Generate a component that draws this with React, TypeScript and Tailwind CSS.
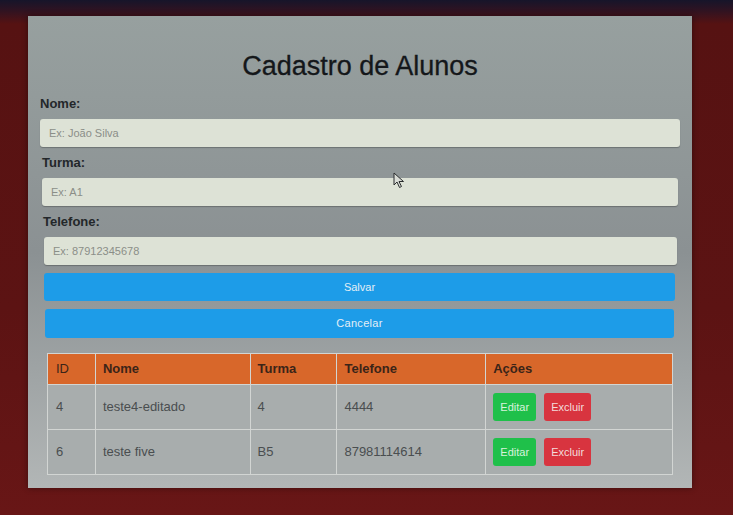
import React from 'react';

type Aluno = { id: number; nome: string; turma: string; telefone: string };

const alunos: Aluno[] = [
    { id: 4, nome: 'teste4-editado', turma: '4', telefone: '4444' },
    { id: 6, nome: 'teste five', turma: 'B5', telefone: '87981114614' },
];

const fields = [
    { label: 'Nome:', placeholder: 'Ex: João Silva', mx: 'ml-[12px] mr-[12px]' },
    { label: 'Turma:', placeholder: 'Ex: A1', mx: 'ml-[14px] mr-[14px]' },
    { label: 'Telefone:', placeholder: 'Ex: 87912345678', mx: 'ml-[16px] mr-[15px]' },
];

function Cursor() {
    return (
        <svg className="absolute left-[365px] top-[156px]" width="12" height="17" viewBox="0 0 12 17">
            <path d="M1 1 L1 13 L4 10 L6.5 15.5 L8.5 14.5 L6 9.5 L10.5 9.5 Z" fill="#d9dcd6" stroke="#2a2d2e" strokeWidth="1" strokeLinejoin="round" />
        </svg>
    );
}

export default function App() {
    return (
        <div
            className="w-[733px] h-[515px] overflow-hidden bg-[linear-gradient(to_bottom,#16152a_0px,#2e1322_10px,#561212_24px,#5c1313_60%,#681616_100%)] pt-[16px] pl-[28px]"
            style={{ fontFamily: '"Liberation Sans", Arial, sans-serif' }}
        >
            <div className="relative w-[664px] h-[472px] bg-gradient-to-b from-[#97a09f] via-[#8b9193] to-[#b2b6b6] shadow-[0_0_6px_rgba(0,0,0,0.4)] pt-[35px]">
                <h1 className="text-center text-[27px] leading-[30px] text-[#14171a] [-webkit-text-stroke:0.3px_#14171a]">Cadastro de Alunos</h1>

                <div className="mt-[15px]">
                    {fields.map((f, i) => (
                        <div key={f.label} className={i === 0 ? '' : 'mt-[8px]'}>
                            <label className={`block text-[13px] leading-[16px] font-bold text-[#23272a] ${i === 0 ? 'ml-[12px]' : i === 1 ? 'ml-[14px]' : 'ml-[15px]'}`}>
                                {f.label}
                            </label>
                            <div className={`mt-[7px] h-[28px] rounded-[3px] bg-[#dde2d6] shadow-[0_1px_1px_rgba(0,0,0,0.25)] flex items-center px-[9px] text-[11px] text-[#8b8e88] ${f.mx}`}>
                                {f.placeholder}
                            </div>
                        </div>
                    ))}
                </div>

                <div className="mt-[8px] ml-[16px] mr-[17px] h-[28px] rounded-[3px] bg-[#1d9ce8] flex items-center justify-center text-[11px] text-[#e3eef6]">
                    Salvar
                </div>
                <div className="mt-[8px] ml-[17px] mr-[18px] h-[29px] rounded-[3px] bg-[#1d9ce8] flex items-center justify-center text-[11px] text-[#e3eef6] tracking-[0.3px]">
                    Cancelar
                </div>

                <table className="mt-[15px] ml-[19px] w-[626px] border-collapse text-[13px]">
                    <thead>
                        <tr className="h-[31px] bg-[#d8672a] text-[#3b2418]">
                            <th className="w-[48px] border border-[#d2d5d3] text-left font-normal pl-[8px]">ID</th>
                            <th className="w-[155px] border border-[#d2d5d3] text-left font-bold pl-[7px]">Nome</th>
                            <th className="w-[87px] border border-[#d2d5d3] text-left font-bold pl-[7px]">Turma</th>
                            <th className="w-[149px] border border-[#d2d5d3] text-left font-bold pl-[7px]">Telefone</th>
                            <th className="w-[187px] border border-[#d2d5d3] text-left font-bold pl-[7px]">Ações</th>
                        </tr>
                    </thead>
                    <tbody>
                        {alunos.map((a) => (
                            <tr key={a.id} className="h-[45px] bg-[#a8adad] text-[#4a4e50]">
                                <td className="border border-[#d2d5d3] pl-[8px]">{a.id}</td>
                                <td className="border border-[#d2d5d3] pl-[7px]">{a.nome}</td>
                                <td className="border border-[#d2d5d3] pl-[7px]">{a.turma}</td>
                                <td className="border border-[#d2d5d3] pl-[7px]">{a.telefone}</td>
                                <td className="border border-[#d2d5d3] pl-[7px]">
                                    <div className="flex gap-[8px]">
                                        <span className="w-[43px] h-[28px] rounded-[3px] bg-[#1fc04a] flex items-center justify-center text-[11px] text-[#d8f2dc]">
                                            Editar
                                        </span>
                                        <span className="w-[47px] h-[28px] rounded-[3px] bg-[#d8343f] flex items-center justify-center text-[11px] text-[#f3dcdc]">
                                            Excluir
                                        </span>
                                    </div>
                                </td>
                            </tr>
                        ))}
                    </tbody>
                </table>

                <Cursor />
            </div>
        </div>
    );
}
